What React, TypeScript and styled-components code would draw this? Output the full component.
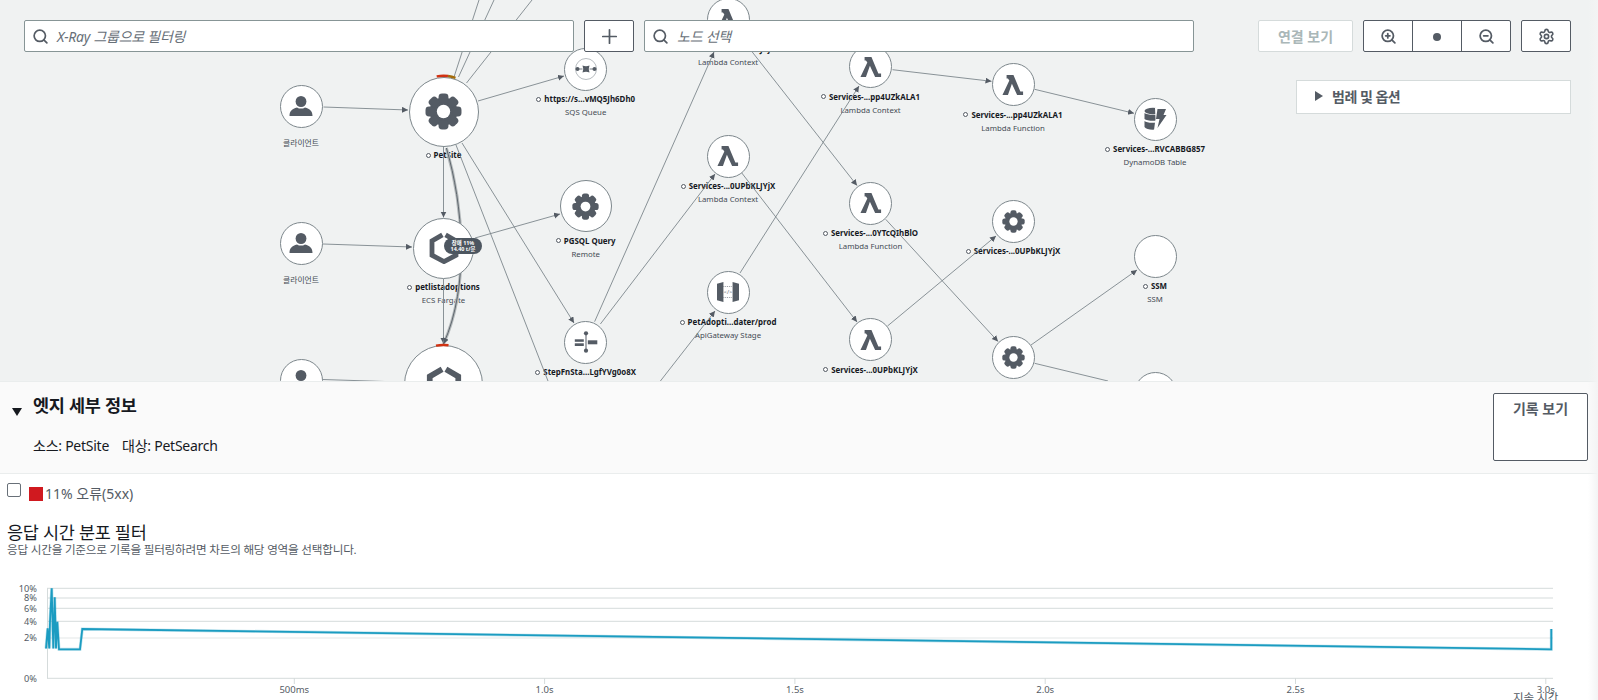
import React from "react";
import styled, { createGlobalStyle } from "styled-components";
import { Plus, Search, Settings, ZoomIn, ZoomOut } from "lucide-react";

const Global = createGlobalStyle`
  html, body { margin: 0; padding: 0; background: #fff; }
  * { box-sizing: border-box; }
  body { font-family: "Noto Sans", "Noto Sans CJK KR", sans-serif; color: #16191f; }
`;

const Page = styled.div`
  position: relative;
  width: 1598px;
  height: 700px;
  overflow: hidden;
  display: flex;
  flex-direction: column;
`;

const Gutter = styled.div`
  position: absolute;
  top: 0;
  right: 0;
  bottom: 0;
  width: 10px;
  z-index: 9;
  background: linear-gradient(to right, rgba(243, 244, 244, 0), #f3f4f4);
`;

const MapArea = styled.section`
  position: relative;
  height: 381px;
  flex: none;
  overflow: hidden;
  background: #f0f2f2;
`;

const EdgeLayer = styled.svg`
  position: absolute;
  inset: 0;
  z-index: 1;
`;

const ArcLayer = styled.svg`
  position: absolute;
  inset: 0;
  z-index: 3;
`;

const NodeWrap = styled.div<{ $x: number; $y: number }>`
  position: absolute;
  left: ${(p) => p.$x - 100}px;
  top: ${(p) => p.$y}px;
  width: 200px;
  display: flex;
  flex-direction: column;
  align-items: center;
`;

const Circle = styled.div<{ $r: number }>`
  position: relative;
  z-index: 2;
  width: ${(p) => p.$r * 2}px;
  height: ${(p) => p.$r * 2}px;
  border-radius: 50%;
  background: #fff;
  border: 1px solid #7d878c;
  display: flex;
  align-items: center;
  justify-content: center;
  flex: none;
`;

const NameRow = styled.div`
  margin-top: 2px;
  height: 13px;
  display: flex;
  align-items: center;
  gap: 3px;
  font-size: 7.9px;
  font-weight: 700;
  color: #16191f;
  white-space: nowrap;
`;

const Dot = styled.span`
  width: 5px;
  height: 5px;
  border-radius: 50%;
  border: 1px solid #545b64;
  background: #fff;
  flex: none;
`;

const SubLabel = styled.div`
  margin-top: 0.5px;
  height: 13px;
  line-height: 13px;
  font-size: 7.8px;
  color: #444b54;
  white-space: nowrap;
`;

const ClientLabel = styled(SubLabel)`
  margin-top: 9px;
`;

const FaultBadge = styled.div`
  position: absolute;
  left: 444px;
  top: 238px;
  z-index: 4;
  width: 38px;
  height: 16px;
  border-radius: 8px;
  background: #4d5660;
  color: #fff;
  font-size: 5.4px;
  font-weight: 700;
  line-height: 6.5px;
  text-align: center;
  padding-top: 1.5px;
  white-space: nowrap;
`;

const Toolbar = styled.div`
  position: absolute;
  left: 24px;
  top: 20px;
  width: 1547px;
  z-index: 5;
  display: flex;
  height: 32px;
`;

const SearchBox = styled.div<{ $w: number }>`
  width: ${(p) => p.$w}px;
  height: 32px;
  background: #fff;
  border: 1px solid #879596;
  border-radius: 2px;
  display: flex;
  align-items: center;
  padding-left: 7px;
  gap: 8px;
  color: #545b64;
`;

const Placeholder = styled.span`
  font-style: italic;
  font-size: 14px;
  letter-spacing: -0.25px;
  color: #687078;
  white-space: nowrap;
`;

const IconButton = styled.button`
  width: 50px;
  height: 32px;
  padding: 0;
  background: #fff;
  border: 1px solid #545b64;
  border-radius: 2px;
  display: flex;
  align-items: center;
  justify-content: center;
  color: #545b64;
`;

const PlusButton = styled(IconButton)`
  margin: 0 10px;
`;

const DisabledButton = styled.button`
  margin-left: 64px;
  width: 95px;
  height: 32px;
  padding: 0;
  background: #fff;
  border: 1px solid #d5dbdb;
  border-radius: 2px;
  font: 700 14px "Noto Sans", "Noto Sans CJK KR", sans-serif;
  color: #aab7b8;
`;

const ZoomGroup = styled.div`
  margin-left: 10px;
  display: flex;
  width: 148px;
  height: 32px;
  background: #fff;
  border: 1px solid #545b64;
  border-radius: 2px;
`;

const ZoomCell = styled.div`
  flex: 1;
  display: flex;
  align-items: center;
  justify-content: center;
  color: #545b64;
  & + & {
    border-left: 1px solid #545b64;
  }
`;

const ResetDot = styled.span`
  width: 8px;
  height: 8px;
  margin-top: 2px;
  border-radius: 50%;
  background: #545b64;
`;

const SettingsButton = styled(IconButton)`
  margin-left: 10px;
`;

const LegendPanel = styled.div`
  position: absolute;
  left: 1296px;
  top: 80px;
  z-index: 5;
  width: 275px;
  height: 34px;
  background: #fff;
  border: 1px solid #d5dbdb;
  display: flex;
  align-items: center;
  padding: 0 0 2px 18px;
  gap: 9px;
  font-size: 14px;
  font-weight: 700;
  letter-spacing: -0.5px;
  color: #545b64;
`;

const RightTriangle = styled.span`
  width: 0;
  height: 0;
  border-left: 8px solid #545b64;
  border-top: 5px solid transparent;
  border-bottom: 5px solid transparent;
`;

const DetailPanel = styled.section`
  height: 93px;
  flex: none;
  background: #fafafa;
  border-top: 1px solid #eaeded;
  border-bottom: 1px solid #eaeded;
  padding: 11px 10px 0 12px;
  display: flex;
  align-items: flex-start;
`;

const DownTriangle = styled.span`
  margin-top: 15px;
  width: 0;
  height: 0;
  flex: none;
  border-top: 8px solid #16191f;
  border-left: 5px solid transparent;
  border-right: 5px solid transparent;
`;

const DetailText = styled.div`
  margin-left: 11px;
  flex: 1;
`;

const DetailTitle = styled.h2`
  margin: 0;
  font-size: 17.5px;
  letter-spacing: -0.25px;
  line-height: 24px;
  font-weight: 700;
  color: #16191f;
`;

const DetailMeta = styled.div`
  margin-top: 19px;
  display: flex;
  gap: 13px;
  font-size: 14px;
  letter-spacing: -0.25px;
  line-height: 20px;
  color: #16191f;
`;

const TraceButton = styled.button`
  width: 95px;
  height: 68px;
  padding: 5px 0 0;
  background: #fff;
  border: 1px solid #545b64;
  border-radius: 2px;
  display: flex;
  justify-content: center;
  align-items: flex-start;
  font: 700 14px/20px "Noto Sans", "Noto Sans CJK KR", sans-serif;
  color: #545b64;
`;

const Body = styled.section`
  padding-left: 7px;
  flex: 1;
`;

const ErrorRow = styled.div`
  height: 47px;
  display: flex;
  align-items: flex-start;
  padding-top: 9px;
`;

const Check = styled.input`
  appearance: none;
  margin: 0;
  width: 14px;
  height: 14px;
  border: 1px solid #687078;
  border-radius: 2px;
  background: #fff;
`;

const Swatch = styled.span`
  margin: 4px 2px 0 8px;
  width: 14px;
  height: 14px;
  background: #d0191f;
`;

const ErrorText = styled.span`
  margin-top: 1px;
  font-size: 14px;
  line-height: 20px;
  color: #545b64;
`;

const SectionTitle = styled.h3`
  margin: 0;
  font-size: 17.5px;
  letter-spacing: -0.27px;
  line-height: 22px;
  font-weight: 400;
  color: #16191f;
`;

const SectionHint = styled.p`
  margin: 0;
  font-size: 11.6px;
  letter-spacing: -0.21px;
  line-height: 14px;
  color: #545b64;
`;

const Chart = styled.svg`
  display: block;
  margin: 13px 0 0 -7px;
  font-family: "Noto Sans", "Noto Sans CJK KR", sans-serif;
  font-size: 9.2px;
  fill: #545b64;
`;

const c = "#545b64";

function Gear({ size }: { size: number }) {
  return (
    <svg width={size} height={size} viewBox="0 0 36 36">
      <g fill={c}>
        <circle cx="18" cy="18" r="13.6" />
        {[0, 45, 90, 135, 180, 225, 270, 315].map((a) => (
          <rect key={a} x="13.2" y="0.5" width="9.6" height="9" rx="3.4" transform={`rotate(${a} 18 18)`} />
        ))}
      </g>
      <circle cx="18" cy="18" r="6.5" fill="#fff" />
    </svg>
  );
}

function Lambda() {
  return (
    <svg width="22" height="22" viewBox="0 0 24 24">
      <path fill={c} d="M5 1H12.5L20 19H23V23H16.5L10.8 10.5L6.5 23H0.5L8 7L6.5 5H5Z" />
    </svg>
  );
}

function Person() {
  return (
    <svg width="24" height="20" viewBox="0 0 24 20">
      <ellipse cx="12" cy="5.5" rx="5.4" ry="5.5" fill={c} />
      <path fill={c} d="M0.5 20C0.5 15 3 12.6 8 11.4C10.5 13 13.5 13 16 11.4C21 12.6 23.5 15 23.5 20Z" />
    </svg>
  );
}

function Fargate({ size }: { size: number }) {
  return (
    <svg width={size} height={size} viewBox="0 0 40 40">
      <path fill="none" stroke={c} strokeWidth="6" d="M18 3.5L5 11V29L20 37L35 29V11L22 3.5" />
    </svg>
  );
}

function Sqs() {
  return (
    <svg width="24" height="24" viewBox="0 0 24 24">
      <circle cx="12" cy="12" r="10.5" fill="none" stroke="#a4abb0" strokeWidth="0.8" />
      <path fill={c} d="M8.5 8.5Q12 10 15.5 8.5Q14 12 15.5 15.5Q12 14 8.5 15.5Q10 12 8.5 8.5Z" />
      <circle cx="3.5" cy="12" r="2" fill={c} />
      <circle cx="20.5" cy="12" r="2" fill={c} />
      <path stroke={c} strokeWidth="0.8" d="M5 12H8.5M15.5 12H19" />
    </svg>
  );
}

function StepFn() {
  return (
    <svg width="24" height="24" viewBox="0 0 24 24">
      <g fill={c}>
        <circle cx="12" cy="3.3" r="2.1" />
        <circle cx="12" cy="20.7" r="2.1" />
        <rect x="11.5" y="3" width="1" height="18" />
        <rect x="0.8" y="9.3" width="9" height="2.5" />
        <rect x="0.8" y="13.3" width="9" height="2.7" />
        <rect x="13.8" y="10.3" width="9.5" height="4" />
      </g>
    </svg>
  );
}

function Dynamo() {
  return (
    <svg width="24" height="24" viewBox="0 0 24 24">
      <g fill={c}>
        <ellipse cx="10" cy="4" rx="8.5" ry="3.2" />
        <path d="M1.5 6C4 8.4 16 8.4 18.5 6V12C16 14.4 4 14.4 1.5 12Z" />
        <path d="M1.5 14C4 16.4 14 16.4 17 14V20C15 23.5 4 23.5 1.5 20Z" />
      </g>
      <path fill="#fff" d="M12 1H24V8L19 23H11L12.5 12Z" />
      <path fill={c} d="M14.5 2H23L20.5 8H23.5L14.5 21L16.5 12H13Z" />
    </svg>
  );
}

function ApiGw() {
  return (
    <svg width="22" height="22" viewBox="0 0 24 24">
      <path fill={c} d="M0 3L7 1V23L0 21Z" />
      <path fill={c} d="M24 3L17 1V23L24 21Z" />
      <path fill="none" stroke={c} strokeWidth="0.7" strokeDasharray="1 1" d="M7 6H17M7 18H17" />
      <text x="12" y="14" fontSize="6" textAnchor="middle" fill={c} fontFamily="Noto Sans, sans-serif">
        {"</>"}
      </text>
    </svg>
  );
}

type NodeData = {
  x: number;
  y: number;
  r: number;
  icon?: React.ReactNode;
  name?: string;
  sub?: string;
  client?: boolean;
};

const nodes: NodeData[] = [
  { x: 301, y: 106, r: 21.5, icon: <Person />, sub: "클라이언트", client: true },
  { x: 301, y: 243, r: 21.5, icon: <Person />, sub: "클라이언트", client: true },
  { x: 301, y: 380, r: 21.5, icon: <Person /> },
  { x: 443.5, y: 111.7, r: 35, icon: <Gear size={37} />, name: "PetSite" },
  { x: 443.5, y: 248, r: 30.5, icon: <Fargate size={32} />, name: "petlistadoptions", sub: "ECS Fargate" },
  { x: 443.5, y: 384.5, r: 39.5, icon: <Fargate size={38} /> },
  { x: 585.7, y: 69, r: 21.5, icon: <Sqs />, name: "https://s...vMQ5Jh6Dh0", sub: "SQS Queue" },
  { x: 585.7, y: 206, r: 26, icon: <Gear size={27} />, name: "PGSQL Query", sub: "Remote" },
  { x: 585.7, y: 342, r: 21.5, icon: <StepFn />, name: "StepFnSta...LgfYVg0o8X" },
  { x: 728, y: 19, r: 21.5, icon: <Lambda />, name: "Services-...0UPbKLJYjX", sub: "Lambda Context" },
  { x: 728, y: 156, r: 21.5, icon: <Lambda />, name: "Services-...0UPbKLJYjX", sub: "Lambda Context" },
  { x: 728, y: 292, r: 21.5, icon: <ApiGw />, name: "PetAdopti...dater/prod", sub: "ApiGateway Stage" },
  { x: 870.5, y: 66.5, r: 21.5, icon: <Lambda />, name: "Services-...pp4UZkALA1", sub: "Lambda Context" },
  { x: 870.5, y: 203.3, r: 21.5, icon: <Lambda />, name: "Services-...0YTcQIhBlO", sub: "Lambda Function" },
  { x: 870.5, y: 339.7, r: 21.5, icon: <Lambda />, name: "Services-...0UPbKLJYjX", sub: "Lambda Function" },
  { x: 1013, y: 84.7, r: 21.5, icon: <Lambda />, name: "Services-...pp4UZkALA1", sub: "Lambda Function" },
  { x: 1013, y: 221, r: 21.5, icon: <Gear size={23} />, name: "Services-...0UPbKLJYjX" },
  { x: 1013, y: 357.5, r: 21.5, icon: <Gear size={23} /> },
  { x: 1155, y: 119, r: 21.5, icon: <Dynamo />, name: "Services-...RVCABBG857", sub: "DynamoDB Table" },
  { x: 1155, y: 256.3, r: 21.5, name: "SSM", sub: "SSM" },
  { x: 1155, y: 393.5, r: 21.5 },
];

const edges: [number, number, number, number][] = [
  [323.5, 107, 408, 110],
  [478, 101, 564, 76],
  [443.5, 147, 443.5, 217.5],
  [443.5, 279, 443.5, 344],
  [462, 143, 574, 323],
  [323, 244, 412, 247],
  [475, 238, 560, 214],
  [594.6, 321.7, 714, 52],
  [600.4, 324, 715, 174],
  [740, 273, 859, 86],
  [750.7, 50, 857, 185.5],
  [741.8, 173, 857, 322],
  [660.4, 381, 715, 311],
  [892.5, 69.7, 991.5, 81.3],
  [1034.6, 89.3, 1134, 113.3],
  [885.7, 219.3, 998, 341.5],
  [887.5, 326, 996, 236],
  [1031, 345, 1137, 270],
];

const plainLines: [number, number, number, number][] = [
  [454, 77, 479, 0],
  [458.5, 77, 494, 0],
  [466.5, 83, 532, 0],
  [456, 145, 548, 381],
  [1034.6, 363.3, 1108, 381],
  [323, 379.5, 400, 382],
];

const yTicks: [string, number][] = [
  ["10%", 588.3],
  ["8%", 598],
  ["6%", 608.3],
  ["4%", 621.3],
  ["2%", 638],
  ["0%", 678.3],
];

const xTicks: [string, number][] = [
  ["500ms", 294.3],
  ["1.0s", 544.6],
  ["1.5s", 794.9],
  ["2.0s", 1045.2],
  ["2.5s", 1295.5],
  ["3.0s", 1545.8],
];

const seriesPoints =
  "46,648.5 47.7,628.3 49.3,648.5 50,621.7 51.7,588.3 53.3,648.5 54.7,597.3 56,648.5 57.3,621.7 59,649.3 80,649.3 82.3,629 1550,649.3 1551.3,649.3 1551.3,629";

function GraphNode({ n }: { n: NodeData }) {
  return (
    <NodeWrap $x={n.x} $y={n.y - n.r}>
      <Circle $r={n.r}>{n.icon}</Circle>
      {n.name && (
        <NameRow>
          <Dot />
          {n.name}
        </NameRow>
      )}
      {n.sub && (n.client ? <ClientLabel>{n.sub}</ClientLabel> : <SubLabel>{n.sub}</SubLabel>)}
    </NodeWrap>
  );
}

export default function App() {
  return (
    <Page>
      <Global />
      <Gutter />
      <MapArea>
        {nodes.map((n, i) => (
          <GraphNode key={i} n={n} />
        ))}
        <EdgeLayer width="1598" height="381" viewBox="0 0 1598 381">
          <defs>
            <marker id="arrow" markerWidth="7" markerHeight="7" refX="6" refY="3" orient="auto" markerUnits="userSpaceOnUse">
              <path d="M0 0L6 3L0 6Z" fill="#545b64" />
            </marker>
          </defs>
          <g stroke="#7d878c" strokeWidth="0.9" fill="none">
            {edges.map((e, i) => (
              <line key={i} x1={e[0]} y1={e[1]} x2={e[2]} y2={e[3]} markerEnd="url(#arrow)" />
            ))}
            {plainLines.map((e, i) => (
              <line key={i} x1={e[0]} y1={e[1]} x2={e[2]} y2={e[3]} />
            ))}
            <path d="M446.4 148C463 205 470 285 443.5 344" stroke="#b4b9bb" strokeWidth="3" />
            <path d="M446.4 148C463 205 470 285 443.5 344" stroke="#5f676e" strokeWidth="1" markerEnd="url(#arrow)" />
          </g>
        </EdgeLayer>
        <ArcLayer width="1598" height="381" viewBox="0 0 1598 381">
          <g fill="none" strokeWidth="2.4">
            <path d="M436.7 76.4A36 36 0 0 1 448 76" stroke="#d13212" />
            <path d="M448 76A36 36 0 0 1 455.5 77.8" stroke="#a36b0a" />
            <path d="M436 345.6A40 40 0 0 1 448.5 345.3" stroke="#d13212" />
          </g>
        </ArcLayer>
        <FaultBadge>
          장애 11%
          <br />
          14.40 t/분
        </FaultBadge>
        <Toolbar>
          <SearchBox $w={550}>
            <Search size={17} strokeWidth={2.4} />
            <Placeholder>X-Ray 그룹으로 필터링</Placeholder>
          </SearchBox>
          <PlusButton>
            <Plus size={23} strokeWidth={1.8} />
          </PlusButton>
          <SearchBox $w={550}>
            <Search size={17} strokeWidth={2.4} />
            <Placeholder>노드 선택</Placeholder>
          </SearchBox>
          <DisabledButton>연결 보기</DisabledButton>
          <ZoomGroup>
            <ZoomCell>
              <ZoomIn size={17} strokeWidth={2.5} />
            </ZoomCell>
            <ZoomCell>
              <ResetDot />
            </ZoomCell>
            <ZoomCell>
              <ZoomOut size={17} strokeWidth={2.5} />
            </ZoomCell>
          </ZoomGroup>
          <SettingsButton>
            <Settings size={17} strokeWidth={2.3} />
          </SettingsButton>
        </Toolbar>
        <LegendPanel>
          <RightTriangle />
          범례 및 옵션
        </LegendPanel>
      </MapArea>
      <DetailPanel>
        <DownTriangle />
        <DetailText>
          <DetailTitle>엣지 세부 정보</DetailTitle>
          <DetailMeta>
            <span>소스: PetSite</span>
            <span>대상: PetSearch</span>
          </DetailMeta>
        </DetailText>
        <TraceButton>기록 보기</TraceButton>
      </DetailPanel>
      <Body>
        <ErrorRow>
          <Check type="checkbox" />
          <Swatch />
          <ErrorText>11% 오류(5xx)</ErrorText>
        </ErrorRow>
        <SectionTitle>응답 시간 분포 필터</SectionTitle>
        <SectionHint>응답 시간을 기준으로 기록을 필터링하려면 차트의 해당 영역을 선택합니다.</SectionHint>
        <Chart width="1598" height="130" viewBox="0 570 1598 130">
          {yTicks.map(([label, y]) => (
            <g key={label}>
              <line x1="47" x2="1553" y1={y} y2={y} stroke={label === "8%" || label === "2%" ? "#e3e7e7" : "#d5dbdb"} strokeWidth={label === "8%" ? 1.6 : 1} />
              <text x="37" y={y + 3.3} textAnchor="end">
                {label}
              </text>
            </g>
          ))}
          <line x1="47.5" x2="47.5" y1="588" y2="678.5" stroke="#d5dbdb" />
          {xTicks.map(([label, x]) => (
            <g key={label}>
              <line x1={x} x2={x} y1="678" y2="684" stroke="#d5dbdb" />
              <text x={x} y="692.5" textAnchor="middle" fontSize="9.5">
                {label}
              </text>
            </g>
          ))}
          <text x="1535.7" y="701.5" textAnchor="middle" fontSize="11.5">
            지속 시간
          </text>
          <polyline points={seriesPoints} fill="none" stroke="#1b9cc1" strokeOpacity="0.3" strokeWidth="3" />
          <polyline points={seriesPoints} fill="none" stroke="#1b9cc1" strokeWidth="1.8" />
        </Chart>
      </Body>
    </Page>
  );
}
